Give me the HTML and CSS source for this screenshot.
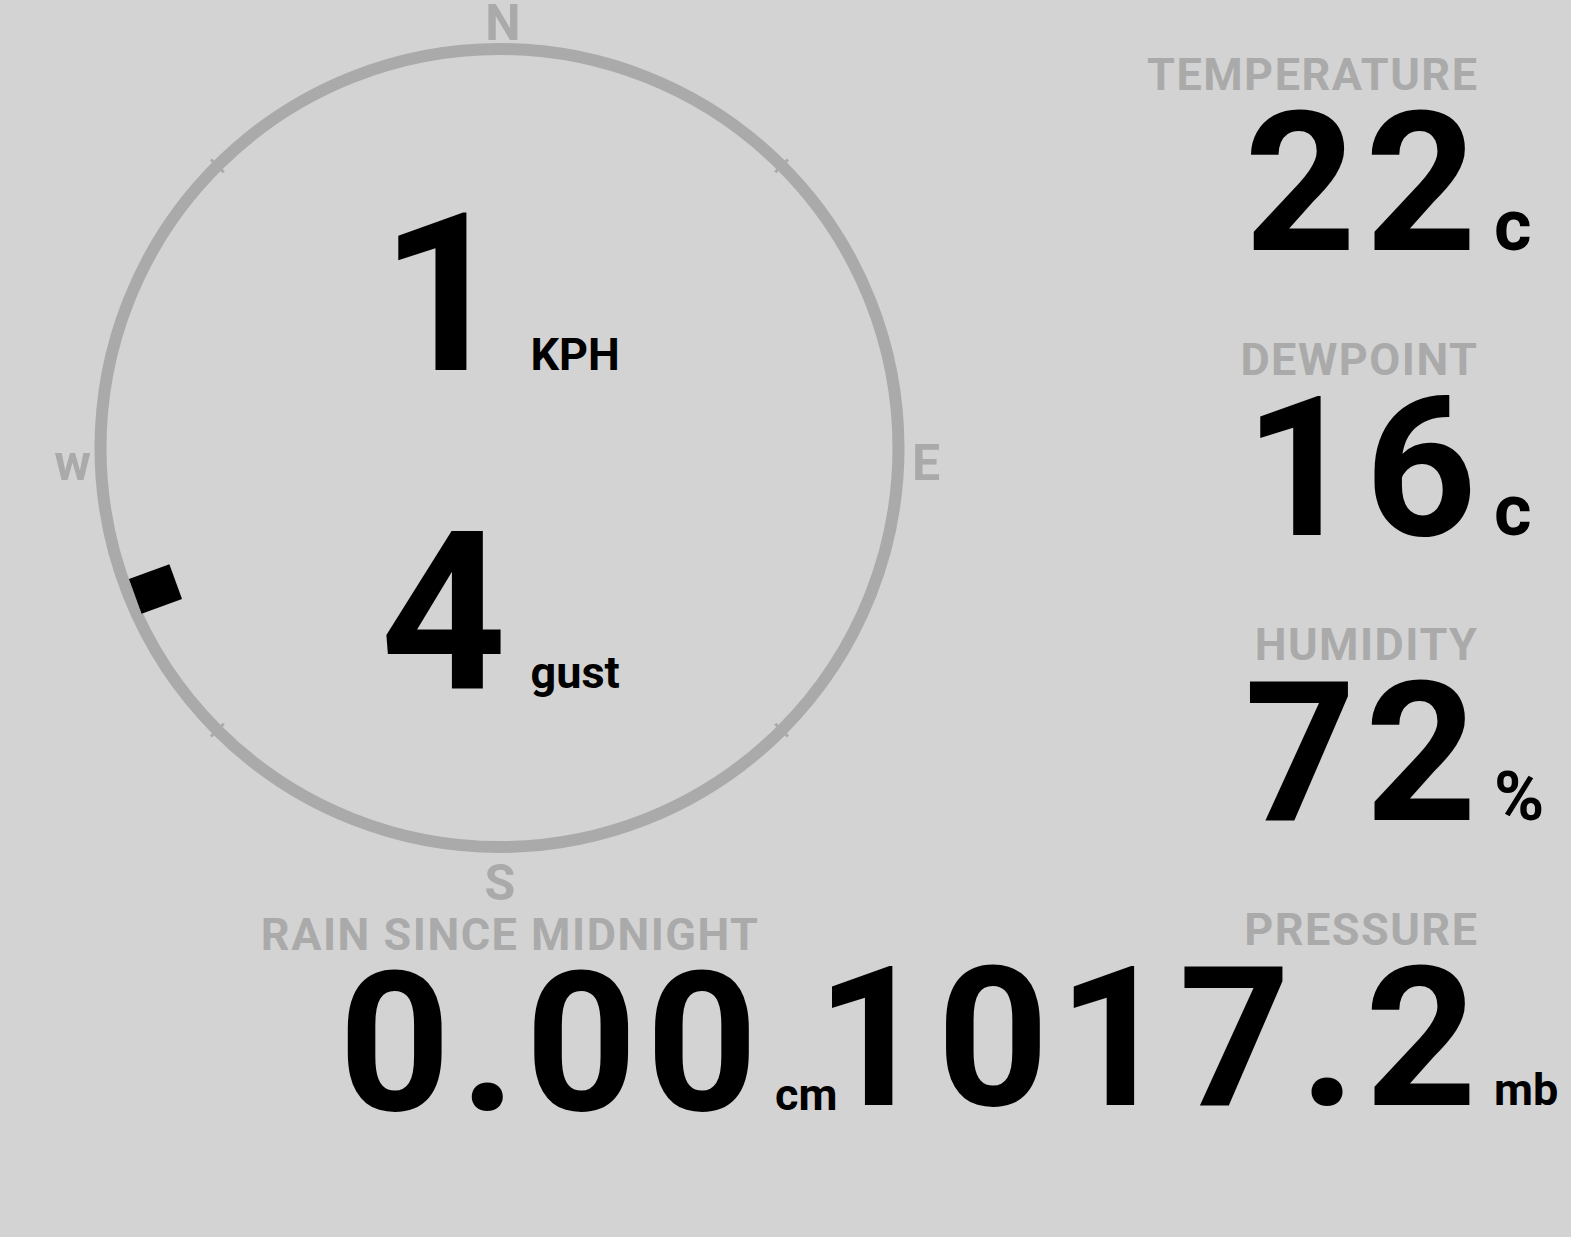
FILE: index.html
```html
<!DOCTYPE html>
<html lang="en">
<head>
  <meta charset="UTF-8">
  <meta name="viewport" content="width=device-width, initial-scale=1.0">
  <title>Weather Station</title>
  <link rel="stylesheet" href="styles.css">
</head>
<body>

<div class="dash">
  <div class="left">
    <div class="compass">
      <svg class="dial" width="1000" height="912" viewBox="0 0 1000 912">
        <circle cx="499.5" cy="448" r="399" fill="none" stroke="#aaaaaa" stroke-width="12"/>
        <g transform="translate(499.5 448)" stroke="#aaaaaa" stroke-width="3">
          <line x1="0" y1="-390" x2="0" y2="-408" transform="rotate(45)"/>
          <line x1="0" y1="-390" x2="0" y2="-408" transform="rotate(135)"/>
          <line x1="0" y1="-390" x2="0" y2="-408" transform="rotate(225)"/>
          <line x1="0" y1="-390" x2="0" y2="-408" transform="rotate(315)"/>
        </g>
        <rect x="-21.5" y="-18.5" width="43" height="37" fill="#000" transform="translate(155.5 589) rotate(-20)"/>
        <text class="point" x="503" y="40" text-anchor="middle">N</text>
        <text class="point" x="912" y="480">E</text>
        <text class="point" x="500" y="900" text-anchor="middle">S</text>
        <text class="point" x="91" y="480" text-anchor="end">w</text>
      </svg>
      <div class="speeds">
        <div class="speed">1<span class="unit">KPH</span></div>
        <div class="speed">4<span class="unit">gust</span></div>
      </div>
    </div>
    <div class="stat rain">
      <div class="label">RAIN SINCE MIDNIGHT</div>
      <div class="value">0.00<span class="hang">cm</span></div>
    </div>
  </div>

  <div class="right">
    <div class="stat">
      <div class="label">TEMPERATURE</div>
      <div class="value">22<span class="hang big">c</span></div>
    </div>
    <div class="stat">
      <div class="label">DEWPOINT</div>
      <div class="value">16<span class="hang big">c</span></div>
    </div>
    <div class="stat">
      <div class="label">HUMIDITY</div>
      <div class="value">72<span class="hang pct">%</span></div>
    </div>
    <div class="stat">
      <div class="label">PRESSURE</div>
      <div class="value">1017.2<span class="hang">mb</span></div>
    </div>
  </div>
</div>

</body>
</html>
```

FILE: styles.css
```css
body {
  margin: 0;
  background-color: #d3d3d3;
  font-family: Roboto, "Liberation Sans", sans-serif;
  font-weight: 700;
  color: #000;
  overflow: hidden;
}

.dash {
  display: flex;
}

.left {
  width: 1000px;
  flex-shrink: 0;
  display: flex;
  flex-direction: column;
}

.compass {
  display: grid;
}

.compass > * {
  grid-area: 1 / 1;
}

.dial {
  display: block;
}

.point {
  font-family: Roboto, "Liberation Sans", sans-serif;
  font-weight: 700;
  font-size: 50px;
  fill: #aaaaaa;
}

.speeds {
  display: flex;
  flex-direction: column;
  gap: 98px;
  padding-top: 185px;
}

.speed {
  text-align: center;
  font-size: 220px;
  line-height: 1;
}

.unit {
  font-size: 45px;
  line-height: 1;
  margin-left: 24px;
}

.right {
  flex: 1;
  min-width: 0;
  display: flex;
  flex-direction: column;
  align-items: flex-end;
  gap: 66px;
  padding: 52px 94px 0 0;
}

.stat {
  text-align: right;
  white-space: nowrap;
}

.rain {
  align-self: flex-end;
  margin-right: 242px;
}

.label {
  font-size: 45px;
  line-height: 1;
  color: #aaaaaa;
  letter-spacing: 1.5px;
  margin-right: -1.5px;
}

.value {
  font-size: 195px;
  line-height: 174px;
  letter-spacing: 9px;
  margin-right: -9px;
}

.hang {
  display: inline-block;
  width: 0;
  font-size: 45px;
  line-height: 1;
  letter-spacing: 0;
  text-indent: 8px;
  text-align: left;
}

.hang.big {
  font-size: 72px;
}

.hang.pct {
  font-size: 68px;
}
```
